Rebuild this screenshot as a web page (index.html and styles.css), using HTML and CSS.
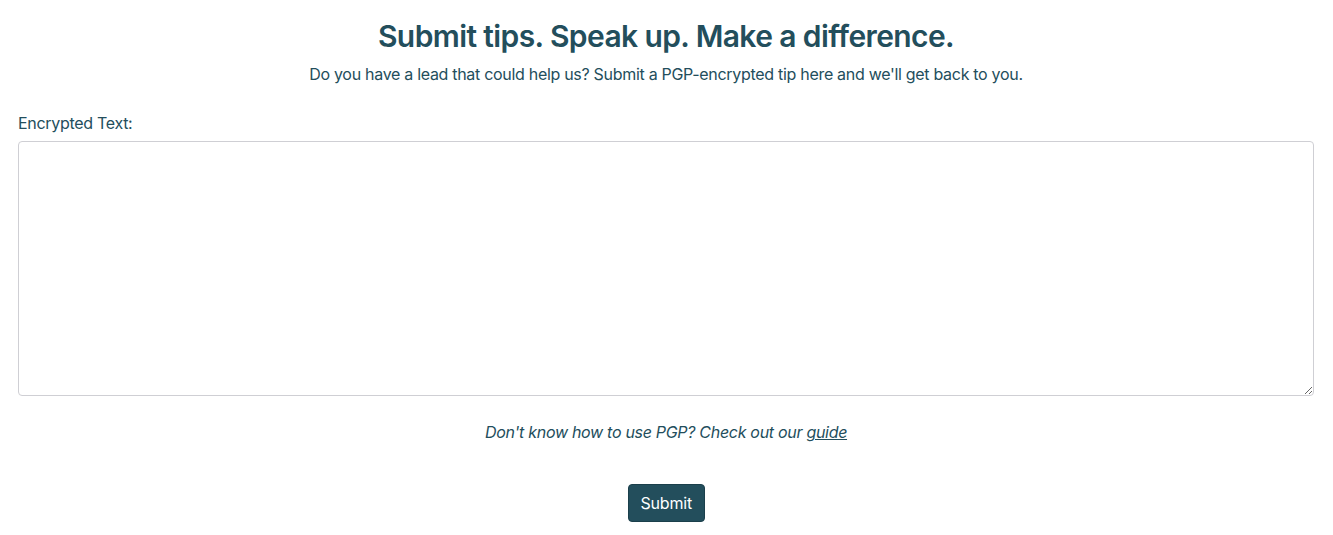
FILE: index.html
```html
<!DOCTYPE html>
<html lang="en">
<head>
<meta charset="utf-8">
<title>Submit tips</title>
<link rel="stylesheet" href="styles.css">
</head>
<body>
<main class="page">
  <header class="intro">
    <h1 class="title">Submit tips. Speak up. Make a difference.</h1>
    <p class="lead">Do you have a lead that could help us? Submit a PGP-encrypted tip here and we'll get back to you.</p>
  </header>
  <form class="tip-form">
    <label class="label" for="tip">Encrypted Text:</label>
    <textarea id="tip" class="textarea"></textarea>
    <p class="help">Don't know how to use PGP? Check out our <a href="#" class="link">guide</a></p>
    <div class="actions">
      <button type="button" class="btn">Submit</button>
    </div>
  </form>
</main>
</body>
</html>
```
FILE: styles.css
```css
* { box-sizing: border-box; }
html, body { margin: 0; padding: 0; background: #fff; }
body {
  font-family: Inter, "Noto Sans", sans-serif;
  color: #234e5c;
  font-size: 16px;
  letter-spacing: -0.3px;
}
.page {
  padding: 14px 19px 0 18px;
  display: flex;
  flex-direction: column;
}
.intro { text-align: center; }
.title {
  margin: 0;
  font-size: 30px;
  font-weight: 600;
  line-height: 44px;
  letter-spacing: -0.6px;
}
.lead {
  margin: 4px 0 0 0;
  font-size: 16px;
  line-height: 24px;
}
.tip-form {
  display: flex;
  flex-direction: column;
  margin-top: 25px;
}
.label {
  font-size: 16px;
  line-height: 24px;
  margin-bottom: 6px;
}
.textarea {
  width: 100%;
  height: 255px;
  border: 1px solid #cfcfd4;
  border-radius: 4px;
  resize: vertical;
  font-family: inherit;
  font-size: 16px;
  padding: 6px 12px;
}
.help {
  margin: 24px 0 0 0;
  text-align: center;
  font-style: italic;
  font-size: 16px;
  line-height: 24px;
}
.link { color: inherit; text-decoration: underline; }
.actions {
  display: flex;
  justify-content: center;
  margin-top: 40px;
}
.btn {
  background: #234e5c;
  color: #fff;
  border: 1px solid #1b3f4b;
  border-radius: 4px;
  font-family: inherit;
  font-size: 16px;
  letter-spacing: -0.2px;
  padding: 0 12px;
  height: 38px;
  width: 77px;
  cursor: pointer;
}
```
